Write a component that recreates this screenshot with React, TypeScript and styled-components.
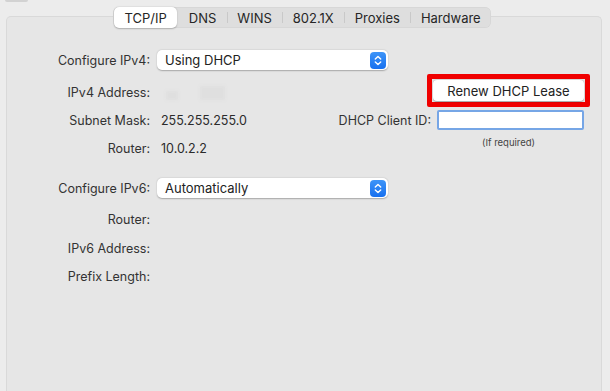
import styled, { createGlobalStyle } from 'styled-components'

const GlobalStyle = createGlobalStyle`
  html, body {
    margin: 0;
    padding: 0;
    background: #ececec;
  }
  body {
    font-family: Inter, "Liberation Sans", Arial, sans-serif;
    font-size: 12.5px;
    color: #2b2b2b;
    -webkit-font-smoothing: antialiased;
  }
`

const tabs = ['TCP/IP', 'DNS', 'WINS', '802.1X', 'Proxies', 'Hardware']

const Stepper = () => (
	<StepBox>
		<svg width="8" height="11" viewBox="0 0 8 11" fill="none">
			<path d="M1.3 4 L4 1.4 L6.7 4" stroke="#fff" strokeWidth="1.4" strokeLinecap="round" strokeLinejoin="round" />
			<path d="M1.3 7 L4 9.6 L6.7 7" stroke="#fff" strokeWidth="1.4" strokeLinecap="round" strokeLinejoin="round" />
		</svg>
	</StepBox>
)

const App = () => {
	return (
		<Window>
			<GlobalStyle />
			<TopStub />
			<TabBar>
				{tabs.map((t, i) => (
					<Tab key={t} $active={i === 0} $sep={i > 1}>{t}</Tab>
				))}
			</TabBar>

			<Panel>
				<Row $h={20}>
					<Label>Configure IPv4:</Label>
					<Popup>
						<span>Using DHCP</span>
						<Stepper />
					</Popup>
				</Row>

				<Row $h={33} $mt={4}>
					<Label $shift={2}>IPv4 Address:</Label>
					<Blurred>
						<Smudge $w={12} $h={9} />
						<Smudge $w={25} $h={14} />
					</Blurred>
					<RightCol>
						<Highlight>
							<Button>Renew DHCP Lease</Button>
						</Highlight>
					</RightCol>
				</Row>

				<Row $h={20} $mt={3}>
					<Label>Subnet Mask:</Label>
					<Value>255.255.255.0</Value>
					<RightCol>
						<FieldRow>
							<FieldLabel>DHCP Client ID:</FieldLabel>
							<TextField />
						</FieldRow>
					</RightCol>
				</Row>

				<Row $h={28} $mt={4}>
					<Label>Router:</Label>
					<Value>10.0.2.2</Value>
					<RightCol $top>
						<Hint>(If required)</Hint>
					</RightCol>
				</Row>

				<Row $h={20} $mt={16}>
					<Label>Configure IPv6:</Label>
					<Popup>
						<span>Automatically</span>
						<Stepper />
					</Popup>
				</Row>

				<Row $h={28} $mt={7}>
					<Label>Router:</Label>
				</Row>
				<Row $h={28} $mt={1}>
					<Label>IPv6 Address:</Label>
				</Row>
				<Row $h={28}>
					<Label>Prefix Length:</Label>
				</Row>
			</Panel>
		</Window>
	)
}

export default App

const Window = styled.div`
  width: 610px;
  height: 391px;
  overflow: hidden;
  background: #ececec;
  display: flex;
  flex-direction: column;
`

const TopStub = styled.div`
  width: 23px;
  height: 2px;
  margin-left: 5px;
  background: #d2d2d2;
  border-radius: 0 0 3px 3px;
`

const TabBar = styled.div`
  position: relative;
  z-index: 1;
  align-self: flex-start;
  margin: 5px 0 0 113px;
  height: 21px;
  display: flex;
  align-items: stretch;
  background: #dedede;
  border-radius: 6px;
  box-shadow: inset 0 0 0 0.5px rgba(0, 0, 0, 0.06);
`

const Tab = styled.div<{ $active?: boolean; $sep?: boolean }>`
  position: relative;
  display: flex;
  align-items: center;
  padding: 0 10.5px;
  font-size: 13px;
  color: #262626;
  border-radius: 5px;
  background: ${p => (p.$active ? '#fff' : 'transparent')};
  box-shadow: ${p => (p.$active ? '0 0.5px 1.5px rgba(0,0,0,0.25)' : 'none')};
  margin: ${p => (p.$active ? '0 1px' : '0')};

  &::before {
    content: '';
    display: ${p => (p.$sep ? 'block' : 'none')};
    position: absolute;
    left: 0;
    top: 5px;
    bottom: 5px;
    width: 1px;
    background: #c9c9c9;
  }
`

const Panel = styled.div`
  margin: -12px 8px 0 6px;
  flex: 1;
  background: #e6e6e6;
  border: 1px solid #d9d9d9;
  border-bottom: none;
  border-radius: 5px 5px 0 0;
  padding: 33px 11px 0 0;
  display: flex;
  flex-direction: column;
`

const Row = styled.div<{ $h: number; $mt?: number }>`
  height: ${p => p.$h}px;
  margin-top: ${p => p.$mt || 0}px;
  display: flex;
  align-items: center;
  flex-shrink: 0;
`

const Label = styled.div<{ $shift?: number }>`
  width: 143px;
  flex-shrink: 0;
  text-align: right;
  color: #333;
  margin-right: 7px;
  transform: translateY(${p => p.$shift || 0}px);
`

const Value = styled.div`
  color: #2b2b2b;
  margin-left: 4px;
`

const Popup = styled.div`
  width: 231px;
  height: 20px;
  box-sizing: border-box;
  background: #fff;
  border-radius: 5px;
  box-shadow: 0 0.5px 1.5px rgba(0, 0, 0, 0.28);
  display: flex;
  align-items: center;
  justify-content: space-between;
  padding: 0 2px 0 8px;
  font-size: 13px;
  color: #222;
`

const StepBox = styled.div`
  width: 16px;
  height: 17px;
  border-radius: 4px;
  background: linear-gradient(#3d94f8, #1770ef);
  display: flex;
  align-items: center;
  justify-content: center;
`

const Blurred = styled.div`
  display: flex;
  align-items: flex-end;
  gap: 22px;
  margin-left: 9px;
  transform: translateY(2px);
  filter: blur(1.5px);
`

const Smudge = styled.span<{ $w: number; $h: number }>`
  display: block;
  width: ${p => p.$w}px;
  height: ${p => p.$h}px;
  background: #dfdfdf;
`

const RightCol = styled.div<{ $top?: boolean }>`
  margin-left: auto;
  width: 163px;
  align-self: ${p => (p.$top ? 'flex-start' : 'center')};
  display: flex;
  flex-direction: column;
  align-items: stretch;
  position: relative;
`

const Highlight = styled.div`
  height: 33px;
  box-sizing: border-box;
  border: 5px solid #f00000;
  border-radius: 2px;
  padding: 1px;
  display: flex;
`

const Button = styled.div`
  flex: 1;
  background: #fff;
  border-radius: 4px;
  box-shadow: 0 0.5px 1.5px rgba(0, 0, 0, 0.3);
  display: flex;
  align-items: center;
  justify-content: center;
  font-size: 13px;
  color: #222;
`

const FieldRow = styled.div`
  display: flex;
  align-items: center;
  justify-content: flex-end;
  padding-right: 6px;
`

const FieldLabel = styled.div`
  position: absolute;
  right: 159px;
  white-space: nowrap;
  color: #333;
`

const TextField = styled.div`
  width: 147px;
  height: 20px;
  box-sizing: border-box;
  background: #fff;
  border: 2px solid #76a6e6;
  border-radius: 2px;
`

const Hint = styled.div`
  font-size: 9.5px;
  color: #444;
  text-align: center;
  margin-top: 3px;
`
